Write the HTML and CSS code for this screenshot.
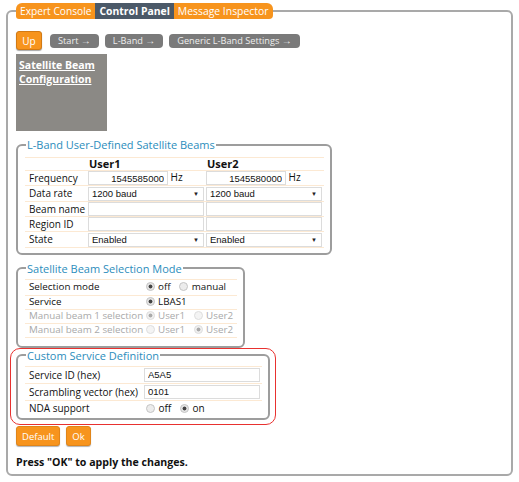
FILE: index.html
```html
<!DOCTYPE html>
<html lang="en">
<head>
  <meta charset="UTF-8" />
  <title>Control Panel</title>
  <link rel="stylesheet" href="styles.css">
</head>
<body>
  <fieldset class="frame">
    <legend class="tabs">
      <span class="tab first">Expert Console</span><span class="tab active">Control Panel</span><span class="tab last">Message Inspector</span>
    </legend>

    <div class="crumbs">
      <button class="up">Up</button>
      <span class="crumb">Start <i>&rarr;</i></span>
      <span class="crumb">L-Band <i>&rarr;</i></span>
      <span class="crumb">Generic L-Band Settings <i>&rarr;</i></span>
    </div>

    <div class="tile"><a href="#">Satellite Beam<br/>Configuration</a></div>

    <fieldset class="group beams">
      <legend>L-Band User-Defined Satellite Beams</legend>
      <table>
        <tr class="head">
          <td class="lbl"></td>
          <td class="usr">User1</td>
          <td class="usr">User2</td>
        </tr>
        <tr>
          <td class="lbl">Frequency</td>
          <td><input class="freq" type="text" value="1545585000"> Hz</td>
          <td><input class="freq" type="text" value="1545580000"> Hz</td>
        </tr>
        <tr>
          <td class="lbl">Data rate</td>
          <td><span class="select"><select><option>1200 baud</option></select></span></td>
          <td><span class="select"><select><option>1200 baud</option></select></span></td>
        </tr>
        <tr>
          <td class="lbl">Beam name</td>
          <td><input class="wide" type="text"></td>
          <td><input class="wide" type="text"></td>
        </tr>
        <tr>
          <td class="lbl">Region ID</td>
          <td><input class="wide" type="text"></td>
          <td><input class="wide" type="text"></td>
        </tr>
        <tr class="end">
          <td class="lbl">State</td>
          <td><span class="select"><select><option>Enabled</option></select></span></td>
          <td><span class="select"><select><option>Enabled</option></select></span></td>
        </tr>
      </table>
    </fieldset>

    <fieldset class="group mode">
      <legend>Satellite Beam Selection Mode</legend>
      <table>
        <tr class="first">
          <td class="lbl">Selection mode</td>
          <td>
            <label><input type="radio" name="sel" checked> off</label>
            <label><input type="radio" name="sel"> manual</label>
          </td>
        </tr>
        <tr>
          <td class="lbl">Service</td>
          <td><label><input type="radio" name="svc" checked> LBAS1</label></td>
        </tr>
        <tr class="off">
          <td class="lbl">Manual beam 1 selection</td>
          <td>
            <label><input type="radio" name="mb1" checked disabled> User1</label>
            <label><input type="radio" name="mb1" disabled> User2</label>
          </td>
        </tr>
        <tr class="off">
          <td class="lbl">Manual beam 2 selection</td>
          <td>
            <label><input type="radio" name="mb2" disabled> User1</label>
            <label><input type="radio" name="mb2" checked disabled> User2</label>
          </td>
        </tr>
      </table>
    </fieldset>

    <div class="highlight">
      <fieldset class="group custom">
        <legend>Custom Service Definition</legend>
        <table>
          <tr>
            <td class="lbl">Service ID (hex)</td>
            <td><input class="hex" type="text" value="A5A5"></td>
          </tr>
          <tr>
            <td class="lbl">Scrambling vector (hex)</td>
            <td><input class="hex" type="text" value="0101"></td>
          </tr>
          <tr class="last">
            <td class="lbl">NDA support</td>
            <td>
              <label><input type="radio" name="nda"> off</label>
              <label><input type="radio" name="nda" checked> on</label>
            </td>
          </tr>
        </table>
      </fieldset>
    </div>

    <div class="actions">
      <button class="btn">Default</button>
      <button class="btn">Ok</button>
    </div>

    <p class="note">Press "OK" to apply the changes.</p>
  </fieldset>
</body>
</html>
```

FILE: styles.css
```css
* {
  box-sizing: border-box;
}

body {
  margin: 0;
  font-family: "Open Sans", sans-serif;
  font-size: 10px;
  color: #111;
  background: #fff;
}

/* outer frame with the tab bar as legend */
.frame {
  margin: 3px 6px 0;
  padding: 0 8px 5px;
  border: 2px solid #a9a9a9;
  border-radius: 6px;
  min-width: 0;
}

.tabs {
  padding: 0;
  display: flex;
  height: 16px;
}

.tab {
  display: inline-block;
  height: 16px;
  line-height: 16px;
  padding: 0 4px;
  font-size: 10.4px;
  color: #fff;
  background: #f7941d;
}

.tab.first {
  font-size: 10.2px;
  border-radius: 6px 0 0 3px;
}

.tab.last {
  padding: 0 5px 0 4px;
  border-radius: 0 6px 4px 0;
}

.tab.active {
  background: #4b5968;
  font-weight: bold;
}

/* breadcrumbs */
.crumbs {
  display: flex;
  align-items: center;
  margin-top: 12px;
  height: 19px;
}

.up {
  width: 26px;
  height: 19px;
  margin-right: 8px;
  padding: 0;
  font: 10px "Open Sans", sans-serif;
  color: #fff;
  background: #f7941d;
  border: 1px solid #d27a14;
  border-radius: 3px;
  box-shadow: 0 1px 1px rgba(0, 0, 0, 0.35);
}

.crumb {
  height: 14px;
  line-height: 14px;
  padding: 0 8px;
  margin-right: 6px;
  font-size: 9.2px;
  color: #eee;
  background: #7a7a7a;
  border-radius: 4px;
}

.crumb i {
  font-style: normal;
  font-family: "Liberation Sans", sans-serif;
  font-size: 10px;
}

.tile {
  margin-top: 4px;
  width: 91px;
  height: 77px;
  padding: 4px 3px;
  background: #8b8985;
}

.tile a {
  font-size: 10.5px;
  font-weight: bold;
  line-height: 13px;
  color: #fff;
}

/* groups */
.group {
  margin: 0;
  padding: 0 6px 5px 7px;
  border: 2px solid #9d9d9d;
  border-radius: 6px;
  min-width: 0;
}

.group legend {
  margin-left: 1px;
  padding: 0 1px;
  font-size: 11px;
  line-height: 13px;
  color: #2c8dbc;
}

.beams {
  margin-top: 7px;
  width: 316px;
}

.beams table {
  margin-top: 6px;
}

.mode {
  margin-top: 7px;
  padding-bottom: 8px;
  width: 229px;
}

.mode table {
  margin-top: 4px;
}

table {
  width: 100%;
  border-collapse: collapse;
}

td {
  padding: 0;
  line-height: 12px;
  border-top: 1px solid #fce9d3;
  white-space: nowrap;
}

tr:last-child td {
  border-bottom: 1px solid #fce9d3;
}

.beams .lbl {
  width: 63px;
  padding-left: 4px;
}

.beams td {
  height: 15px;
  padding-right: 2px;
}

.beams .head td {
  height: 13px;
}

.beams .end td {
  height: 14px;
}

.usr {
  font-weight: bold;
  font-size: 11px;
  line-height: 12px;
  padding-left: 1px;
  vertical-align: bottom;
}

input[type="text"],
select {
  height: 14px;
  padding: 0 3px;
  font: 9.5px "Liberation Sans", sans-serif;
  color: #111;
  border: 1px solid #dcdcdc;
  background: #fff;
  vertical-align: middle;
}

.freq {
  width: 80px;
  height: 15px;
  text-align: right;
  padding-right: 10px;
}

.wide {
  width: 116px;
}

.select {
  position: relative;
  display: inline-block;
  vertical-align: middle;
  line-height: 0;
}

.select select {
  appearance: none;
  width: 116px;
  border-radius: 0;
}

.select::after {
  content: "\25BC";
  position: absolute;
  right: 5px;
  top: 7px;
  font-size: 6px;
  line-height: 0;
  color: #222;
  pointer-events: none;
}

/* radios */
input[type="radio"] {
  appearance: none;
  width: 9px;
  height: 9px;
  margin: 0 1px 0 2px;
  vertical-align: -1px;
  border: 1px solid #c4c4c4;
  border-radius: 50%;
  background: #ececec;
}

input[type="radio"]:checked {
  background: radial-gradient(circle, #444 0, #444 1.6px, #e6e6e6 2.3px);
}

input[type="radio"]:disabled {
  border-color: #dedede;
  background: #f4f4f4;
}

input[type="radio"]:disabled:checked {
  background: radial-gradient(circle, #aaa 0, #aaa 1.6px, #f0f0f0 2.3px);
}

label {
  margin-right: 4px;
}

.mode td {
  height: 14px;
  font-size: 9.8px;
}

.mode tr.first td {
  height: 16px;
}

.mode .lbl {
  width: 127px;
  padding-left: 4px;
}

.mode .off td {
  color: #a9a9a9;
}

/* highlighted custom block */
.highlight {
  margin: 0 0 0 -6px;
  width: 266px;
  padding: 0 5px 4px;
  border: 1px solid #e8312f;
  border-radius: 10px;
}

.custom {
  padding-bottom: 3px;
}

.custom table {
  margin-top: 4px;
}

.custom td {
  height: 17px;
  font-size: 10px;
}

.custom .lbl {
  width: 119px;
  padding-left: 4px;
}

.custom tr.last td {
  border-bottom: none;
  height: 15px;
}

.hex {
  width: 116px;
  height: 15px;
}

.actions {
  display: flex;
  gap: 6px;
  margin-top: 1px;
}

.btn {
  height: 20px;
  padding: 0 5px;
  font: 9.5px "Open Sans", sans-serif;
  color: #fff;
  background: #f7941d;
  border: 1px solid #e0851a;
  border-radius: 3px;
  box-shadow: 0 1px 1px rgba(0, 0, 0, 0.3);
}

.note {
  margin: 9px 0 0;
  font-size: 10.6px;
  font-weight: bold;
  line-height: 14px;
}
```
